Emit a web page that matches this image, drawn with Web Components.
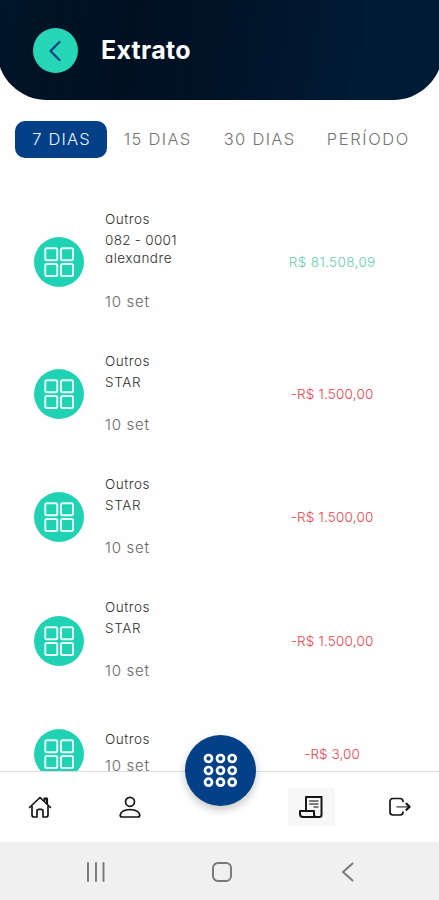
<!DOCTYPE html>
<html lang="pt-BR">
<head>
<meta charset="utf-8">
<title>Extrato</title>
<style>
html,body{margin:0;height:100%;background:#fefefe;overflow:hidden}
</style>
</head>
<body>
<statement-screen></statement-screen>
<script>
const define = (name, html, setup) => customElements.define(name, class extends HTMLElement {
  connectedCallback() {
    if (this.shadowRoot) return;
    const t = document.createElement('template');
    t.innerHTML = html;
    this.attachShadow({mode: 'open'}).append(t.content.cloneNode(true));
    if (setup) setup(this);
  }
});

// Text tracked so that its ink occupies the width given in "w".
define('fit-text', `<style>:host{display:block;white-space:nowrap}span{display:inline-block}</style><span><slot></slot></span>`, el => {
  const s = el.shadowRoot.querySelector('span');
  const n = el.textContent.length;
  s.style.letterSpacing = '0px';
  const natural = s.getBoundingClientRect().width;
  const gap = (+el.getAttribute('w') + .5 - natural) / (n - 1);
  s.style.letterSpacing = gap + 'px';
  s.style.marginRight = -gap + 'px';
});

define('page-header', `<style>
:host{display:flex;align-items:center;box-sizing:border-box;height:100px;margin:0 -3.5px;padding:0 0 0 36.5px;border-radius:0 0 50px 50px;
 background:repeating-linear-gradient(90deg,rgba(50,100,150,.02) 0 1px,transparent 1px 14px),linear-gradient(100deg,#00152a 0,#001021 30%,#001429 55%,#001c37 85%,#001b35 100%)}
button{width:45px;height:45px;border:0;border-radius:50%;padding:0;background:#26d6b6;display:grid;place-items:center}
h1{margin:0 0 0 23px;font:700 25px/32px Inter,sans-serif;color:#fff}
</style>
<button aria-label="Voltar"><svg width="45" height="45" fill="none" stroke="#064488" stroke-width="2.3" stroke-linecap="round" stroke-linejoin="round"><path d="M26.500 14 17.500 23 26.500 32"/></svg></button>
<h1><slot></slot></h1>`);

define('period-tab', `<style>
:host{display:grid;place-items:center;box-sizing:border-box;height:37px;border-radius:10px;font:300 16.5px/20px Inter,sans-serif;color:#747474}
:host([active]){background:#034087;color:#eef5ff}
</style><slot></slot>`);

define('period-tabs', `<style>
:host{display:grid;grid-template-columns:92px 92px 92px 106px;column-gap:4px;padding:20.5px 0 0 15px;height:71px;box-sizing:border-box}
</style>
<period-tab active><fit-text w="57">7 DIAS</fit-text></period-tab>
<period-tab><fit-text w="66">15 DIAS</fit-text></period-tab>
<period-tab style="margin-left:12px"><fit-text w="70">30 DIAS</fit-text></period-tab>
<period-tab style="margin-left:23px"><fit-text w="81">PERÍODO</fit-text></period-tab>`);

define('category-icon', `<style>:host{display:block;width:50px;height:50px}svg{display:block}</style>
<svg width="50" height="50"><circle cx="25" cy="25" r="25" fill="#1fd2b4"/><g fill="none" stroke="#e6fff8" stroke-width="2"><rect x="11.300" y="11.300" width="12" height="12" rx="1.500"/><rect x="27" y="11.300" width="12" height="12" rx="1.500"/><rect x="11.300" y="27" width="12" height="12" rx="1.500"/><rect x="27" y="27" width="12" height="12" rx="1.500"/></g></svg>`);

define('entry-row', `<style>
:host{display:grid;grid-template-columns:50px 1fr 210px;column-gap:21px;align-items:center;padding:0 2px 0 34px;flex:none}
.lines{align-self:start;font:300 13.5px/20px Inter,sans-serif;color:#303030;font-feature-settings:"cv11"}
.amount{justify-self:center;font:300 13.5px/20px Inter,sans-serif;color:var(--amount,#f03e4d)}
</style>
<category-icon></category-icon><div class="lines"><slot></slot></div><div class="amount"><slot name="amount"></slot></div>`);

define('entry-list', `<style>
:host{display:flex;flex-direction:column;height:600px;padding-top:20.5px;box-sizing:border-box;overflow:hidden}
entry-row{height:123.3px}
.first{height:141px;--amount:#65cfb4}
.last{height:103px}
fit-text{height:20px;line-height:20px}
.date{font-size:15px;color:#686868;font-weight:300}
</style>
<entry-row class="first"><fit-text w="44" style="margin-top:17px">Outros</fit-text><fit-text w="71" style="margin-top:1px">082 - 0001</fit-text><fit-text w="66" style="margin-top:-1.5px">alexandre</fit-text><fit-text class="date" w="43.500" style="margin-top:23.5px">10 set</fit-text><fit-text slot="amount" w="86">R$ 81.508,09</fit-text></entry-row>
${[0,1,2].map(() => `<entry-row><fit-text w="44" style="margin-top:18px">Outros</fit-text><fit-text w="35" style="margin-top:1px">STAR</fit-text><fit-text class="date" w="43.500" style="margin-top:23px">10 set</fit-text><fit-text slot="amount" w="82">-R$ 1.500,00</fit-text></entry-row>`).join('')}
<entry-row class="last"><fit-text w="44" style="margin-top:27px">Outros</fit-text><fit-text class="date" w="43.500" style="margin-top:7px">10 set</fit-text><fit-text slot="amount" w="55">-R$ 3,00</fit-text></entry-row>`);

define('nav-item', `<style>
:host{display:grid;place-items:center;width:47px;height:38px;border-radius:2px}
:host([active]){background:#f7f7f7}
</style><slot></slot>`);

define('bottom-nav', `<style>
:host{display:grid;grid-template-columns:repeat(2,90px) 86px 90px 1fr;justify-items:center;box-sizing:border-box;height:71px;padding:15.500px 0 0 0;border-top:1px solid #dedede;background:#fff;position:relative}
nav-item:first-of-type{margin-left:-10px}
svg{display:block;fill:none;stroke:#151515;stroke-width:1.7;stroke-linecap:round;stroke-linejoin:round}
.fab{position:absolute;left:185px;top:-37.500px;width:71px;height:71px;border:0;padding:0;border-radius:50%;background:#034087;box-shadow:0 4px 8px rgba(0,0,0,.22)}
.fab svg{stroke:#fff;stroke-width:2.7}
</style>
<nav-item><svg width="24" height="24"><path d="M1.500 12.500 12 2.500 22.500 12.500M4 11V20q0 2 2 2h3v-6q0-1.700 1.700-1.700h2.600Q15 14.300 15 16v6h3q2 0 2-2v-9"/><path stroke-width="2.200" d="M16.500 5V3.500h2.500v5"/></svg></nav-item>
<nav-item style="margin-left:-10px"><svg width="24" height="24"><circle cx="12" cy="6.800" r="4.500"/><path d="M4.200 22h15.600q2 0 2-2-.8-5-9.800-5.500-9 .5-9.800 5.500 0 2 2 2Z"/></svg></nav-item>
<span></span>
<nav-item active><svg width="26" height="24"><path stroke-width="2" d="M8 15V2h15.500v18q0 2-2 2H5q-3 0-3-3v-3h14v3.500q0 2.500 2.500 2.500"/><path stroke="#555" stroke-width="1.300" d="M11.500 6H20M11.500 9H20M16 12h4"/></svg></nav-item>
<nav-item style="margin-left:2px"><svg width="26" height="24"><path d="M17 6.500Q17 3.500 14 3.500H7Q4 3.500 4 6.500v10.500q0 3 3 3h7q3 0 3-3"/><path stroke="#777" d="M11 11.800h11"/><path stroke-width="2.300" d="m20.500 8.800 3 3-3 3"/></svg></nav-item>
<button class="fab" aria-label="Menu"><svg width="71" height="71">${[23.5,35.5,47.2].map(y => [23.5,35.5,47.2].map(x => `<circle cx="${x}" cy="${y}" r="3.500"/>`).join('')).join('')}</svg></button>`);

define('system-bar', `<style>
:host{display:grid;grid-template-columns:repeat(3,126px);justify-content:center;place-items:center;height:58px;padding:1px 0 0 4px;box-sizing:border-box;background:#f0f0f0}
svg{display:block;fill:none;stroke:#777;stroke-width:1.900;stroke-linecap:round;stroke-linejoin:round}
</style>
<svg width="24" height="24"><path d="M4 3v18M12 3v18M19.500 3v18"/></svg>
<svg width="24" height="24"><rect x="3" y="3" width="18" height="18" rx="5"/></svg>
<svg width="24" height="24"><path d="m16.500 3.500-9.500 8.500 9.500 8.500"/></svg>`);

define('statement-screen', `<style>
:host{display:flex;flex-direction:column;width:439px;height:900px;overflow:hidden;background:#fefefe}
page-header,period-tabs,entry-list,bottom-nav,system-bar{flex:none}
</style>
<page-header><fit-text w="89">Extrato</fit-text></page-header>
<period-tabs></period-tabs>
<entry-list></entry-list>
<bottom-nav></bottom-nav>
<system-bar></system-bar>`);
</script>
</body>
</html>
